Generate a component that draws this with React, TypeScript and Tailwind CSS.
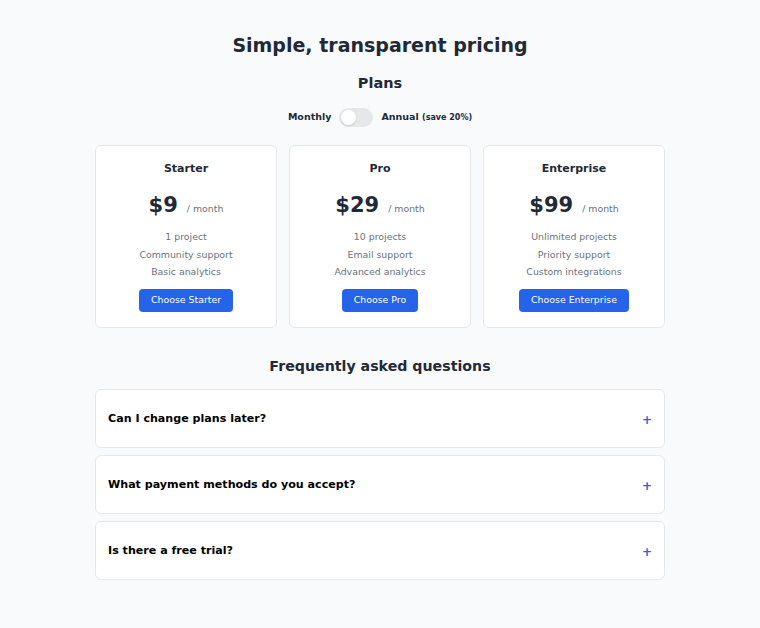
import { useState } from "react";

const plans = [
  { name: "Starter", price: "$9", features: ["1 project", "Community support", "Basic analytics"] },
  { name: "Pro", price: "$29", features: ["10 projects", "Email support", "Advanced analytics"] },
  { name: "Enterprise", price: "$99", features: ["Unlimited projects", "Priority support", "Custom integrations"] },
];

const faqs = ["Can I change plans later?", "What payment methods do you accept?", "Is there a free trial?"];

export default function App() {
  const [annual, setAnnual] = useState(false);

  return (
    <div className="min-h-[628px] bg-[#f9fafb] font-['DejaVu_Sans',sans-serif] text-[#1f2937]">
      <div className="mx-auto w-[570px] pt-[33px] pb-10">
        <h1 className="text-center text-[19px] font-bold leading-[24px]">Simple, transparent pricing</h1>

        {/* Plans */}
        <h2 className="mt-[14px] text-center text-[14.5px] font-bold leading-[24px]">Plans</h2>
        <div className="mt-[12px] flex h-[20px] items-center justify-center gap-[8px] text-[9.5px] font-bold">
          <span>Monthly</span>
          <button
            onClick={() => setAnnual(!annual)}
            className={`flex h-[19px] w-[34px] items-center rounded-full px-[2px] ${annual ? "bg-[#2563eb] justify-end" : "bg-[#e5e7eb] justify-start"}`}
          >
            <span className="h-[15px] w-[15px] rounded-full bg-white shadow-sm" />
          </button>
          <span>
            Annual <span className="text-[8px]">(save 20%)</span>
          </span>
        </div>

        <div className="mt-[18px] grid grid-cols-3 gap-3">
          {plans.map((p) => (
            <div key={p.name} className="flex flex-col items-center rounded-md border border-[#e5e7eb] bg-white pt-[15px] pb-[15px]">
              <h3 className="text-[11px] font-bold leading-[16px]">{p.name}</h3>
              <div className="mt-[14px] flex h-[28px] items-baseline gap-[9px]">
                <span className="text-[21px] font-bold leading-[28px]">{p.price}</span>
                <span className="text-[9.4px] text-[#6b7280]">/ month</span>
              </div>
              <ul className="mt-[9px] text-center text-[9.4px] leading-[17.5px] text-[#6b7280]">
                {p.features.map((f) => (
                  <li key={f}>{f}</li>
                ))}
              </ul>
              <button className="mt-[8px] h-[23px] rounded bg-[#2563eb] px-3 text-[9.4px] text-white">
                Choose {p.name}
              </button>
            </div>
          ))}
        </div>

        {/* FAQ */}
        <h2 className="mt-[26px] text-center text-[14.2px] font-bold leading-[24px]">Frequently asked questions</h2>
        <div className="mt-[11px] flex flex-col gap-[7px]">
          {faqs.map((q) => (
            <div key={q} className="flex h-[59px] items-center justify-between rounded-md border border-[#e5e7eb] bg-white px-3 pt-[3px]">
              <span className="text-[11.1px] font-bold text-black">{q}</span>
              <span className="pl-1 text-[12px] font-bold text-[#2563eb]">+</span>
            </div>
          ))}
        </div>
      </div>
    </div>
  );
}
